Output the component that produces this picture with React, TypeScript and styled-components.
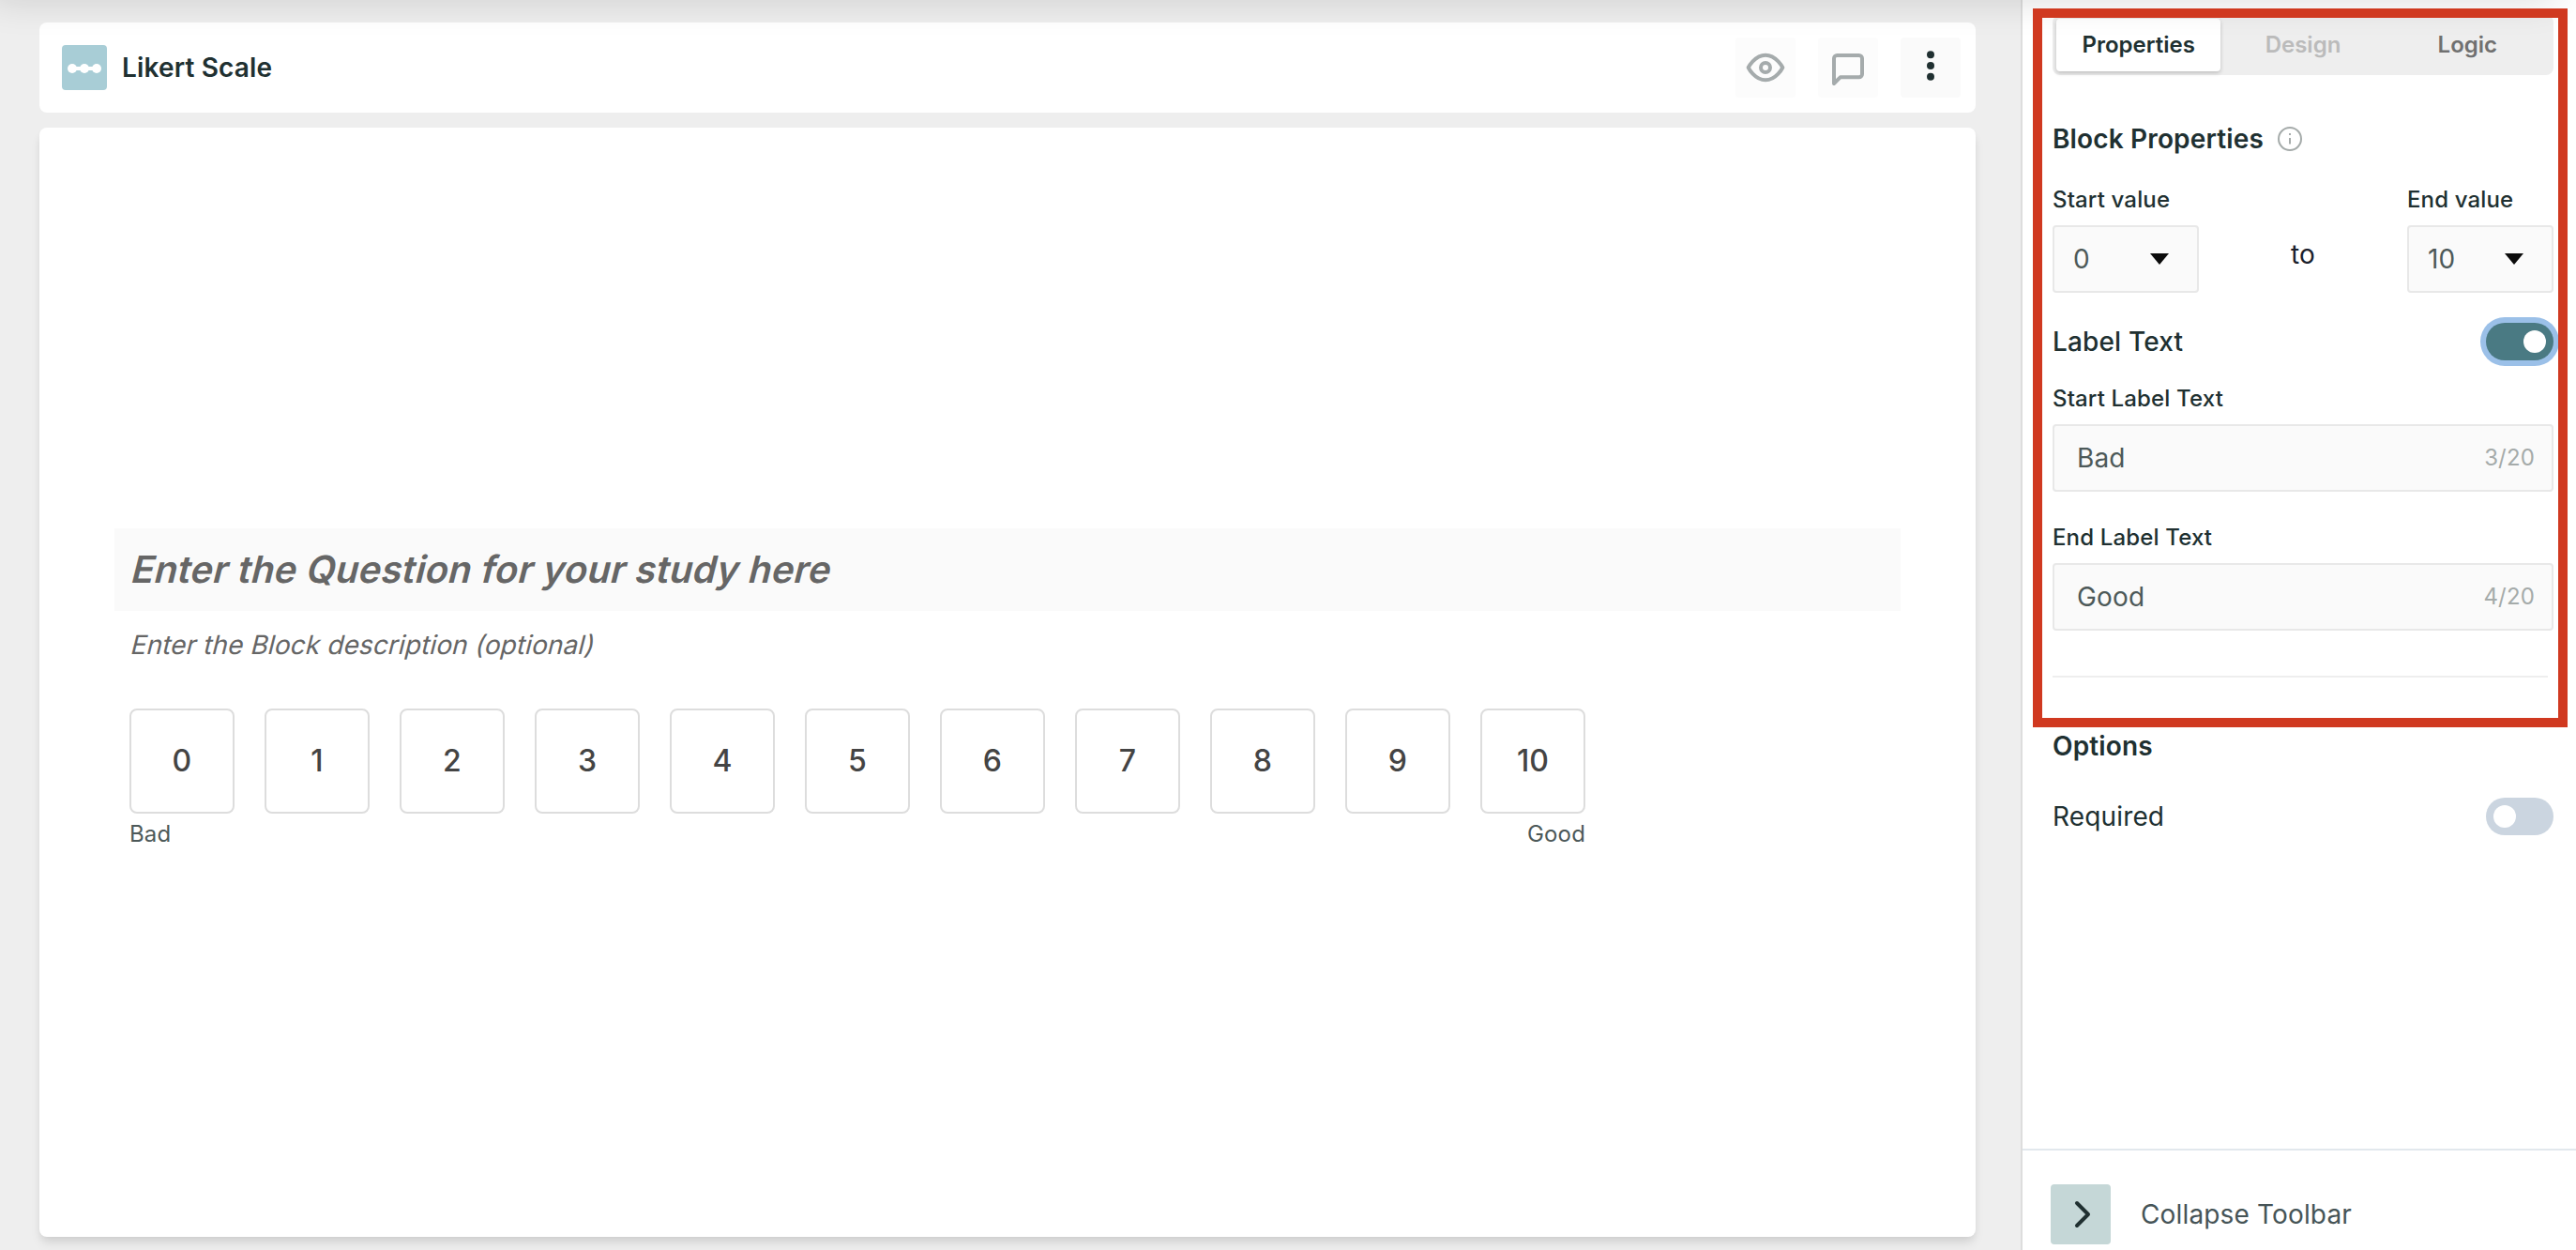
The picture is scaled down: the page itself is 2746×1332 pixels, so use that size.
import React, { useState } from 'react';
import styled, { createGlobalStyle, css } from 'styled-components';

const MAX_LABEL = 20;

export default function App() {
  const [activeTab, setActiveTab] = useState('Properties');
  const [labelsOn, setLabelsOn] = useState(true);
  const [required, setRequired] = useState(false);
  const [startLabel, setStartLabel] = useState('Bad');
  const [endLabel, setEndLabel] = useState('Good');

  return (
    <>
      <GlobalStyle />
      <Page>
        <Workspace>
          <BlockHeader>
            <BlockIcon />
            <BlockName>Likert Scale</BlockName>
            <HeaderActions>
              <ActionButton $muted aria-label="Preview">
                <EyeIcon />
              </ActionButton>
              <ActionButton $muted aria-label="Comments">
                <CommentIcon />
              </ActionButton>
              <ActionButton aria-label="More">
                <DotsIcon />
              </ActionButton>
            </HeaderActions>
          </BlockHeader>

          <Canvas>
            <Question>
              <Slanted>Enter the Question for your study here</Slanted>
            </Question>
            <Description>
              <Slanted>Enter the Block description (optional)</Slanted>
            </Description>
            <LikertScale start={0} end={10} startLabel={startLabel} endLabel={endLabel} />
          </Canvas>
        </Workspace>

        <Sidebar>
          <SidebarBody>
            <Tabs>
              {['Properties', 'Design', 'Logic'].map((tab) => (
                <Tab
                  key={tab}
                  $active={tab === activeTab}
                  disabled={tab === 'Design'}
                  onClick={() => setActiveTab(tab)}
                >
                  {tab}
                </Tab>
              ))}
            </Tabs>

            <SectionTitle>
              Block Properties
              <InfoIcon />
            </SectionTitle>

            <RangeRow>
              <Field>
                <FieldLabel>Start value</FieldLabel>
                <SelectBox>
                  0
                  <Caret />
                </SelectBox>
              </Field>
              <RangeTo>to</RangeTo>
              <Field>
                <FieldLabel>End value</FieldLabel>
                <SelectBox>
                  10
                  <Caret />
                </SelectBox>
              </Field>
            </RangeRow>

            <ToggleRow $top={32} $weight={500}>
              Label Text
              <Toggle $on={labelsOn} $focused onClick={() => setLabelsOn(!labelsOn)}>
                <Knob />
              </Toggle>
            </ToggleRow>

            <TextField $top={25}>
              <FieldLabel>Start Label Text</FieldLabel>
              <InputBox>
                <Input value={startLabel} maxLength={MAX_LABEL} onChange={(e) => setStartLabel(e.target.value)} />
                <Counter>{`${startLabel.length}/${MAX_LABEL}`}</Counter>
              </InputBox>
            </TextField>

            <TextField $top={33}>
              <FieldLabel>End Label Text</FieldLabel>
              <InputBox>
                <Input value={endLabel} maxLength={MAX_LABEL} onChange={(e) => setEndLabel(e.target.value)} />
                <Counter>{`${endLabel.length}/${MAX_LABEL}`}</Counter>
              </InputBox>
            </TextField>

            <Divider />

            <OptionsTitle>Options</OptionsTitle>
            <ToggleRow $top={35} $weight={400}>
              Required
              <Toggle $on={required} onClick={() => setRequired(!required)}>
                <Knob />
              </Toggle>
            </ToggleRow>
          </SidebarBody>

          <SidebarFooter>
            <CollapseButton aria-label="Collapse">
              <ChevronIcon />
            </CollapseButton>
            Collapse Toolbar
          </SidebarFooter>
        </Sidebar>

        <TopShadow />
        <Highlight />
      </Page>
    </>
  );
}

interface LikertScaleProps {
  start: number;
  end: number;
  startLabel: string;
  endLabel: string;
}

function LikertScale({ start, end, startLabel, endLabel }: LikertScaleProps) {
  const values = Array.from({ length: end - start + 1 }, (_, i) => start + i);
  return (
    <Scale>
      <ScaleBoxes>
        {values.map((value) => (
          <ScaleBox key={value}>{value}</ScaleBox>
        ))}
      </ScaleBoxes>
      <ScaleLabels>
        <span>{startLabel}</span>
        <span>{endLabel}</span>
      </ScaleLabels>
    </Scale>
  );
}

const BlockIcon = () => (
  <svg width="48" height="48" viewBox="0 0 48 48">
    <rect width="48" height="48" rx="4" fill="#a8cdd6" />
    <path d="M11 25h26" stroke="#fff" strokeWidth="4" />
    <circle cx="11" cy="25" r="5" fill="#fff" />
    <circle cx="24" cy="25" r="5" fill="#fff" />
    <circle cx="37" cy="25" r="5" fill="#fff" />
  </svg>
);

const EyeIcon = () => (
  <LineIcon viewBox="0 0 24 24">
    <path d="M1 12s4-8 11-8 11 8 11 8-4 8-11 8-11-8-11-8z" />
    <circle cx="12" cy="12" r="3" />
  </LineIcon>
);

// sits a little below the centre of its button
const CommentIcon = () => (
  <LineIcon viewBox="0 -1.2 24 24">
    <path d="M21 15a2 2 0 0 1-2 2H7l-4 4V5a2 2 0 0 1 2-2h14a2 2 0 0 1 2 2z" />
  </LineIcon>
);

const DotsIcon = () => (
  <svg width="64" height="64" viewBox="0 0 64 64" fill="#203031">
    <circle cx="32" cy="18.3" r="4" />
    <circle cx="32" cy="30" r="4" />
    <circle cx="32" cy="41.7" r="4" />
  </svg>
);

const InfoIcon = () => (
  <svg width="26" height="26" viewBox="0 0 26 26" fill="none" stroke="#a5abaa" strokeWidth="2">
    <circle cx="13" cy="13" r="12" />
    <path d="M13 12v6.6M13 7v2" />
  </svg>
);

const Caret = () => (
  <svg width="20" height="12" viewBox="0 0 20 12">
    <path d="M0 0h20L10 12z" fill="#0b0b0b" />
  </svg>
);

const ChevronIcon = () => (
  <svg
    width="64"
    height="64"
    viewBox="0 0 64 64"
    fill="none"
    stroke="#203031"
    strokeWidth="4"
    strokeLinecap="round"
    strokeLinejoin="round"
  >
    <path d="M28 20l12 12-12 12" />
  </svg>
);

const LineIcon = styled.svg`
  width: 40px;
  height: 40px;
  overflow: visible;
  fill: none;
  stroke: #203031;
  stroke-width: 2.4;
  stroke-linecap: round;
  stroke-linejoin: round;
`;

const GlobalStyle = createGlobalStyle`
  * {
    box-sizing: border-box;
  }

  body {
    margin: 0;
    font-family: Inter, 'Liberation Sans', sans-serif;
    font-size: 28px;
    line-height: 40px;
    letter-spacing: 0.15px;
    color: #203031;
    background: #eee;
  }

  svg {
    display: block;
    flex: none;
  }

  button,
  input {
    font: inherit;
    letter-spacing: inherit;
    border: none;
    padding: 0;
    outline: none;
  }
`;

const Page = styled.div`
  position: relative;
  display: flex;
  height: 1332px;
  overflow: hidden;
`;

const Workspace = styled.main`
  flex: 1;
  display: flex;
  flex-direction: column;
  gap: 16px;
  padding: 24px 48px 14px 42px;
`;

const BlockHeader = styled.header`
  display: flex;
  align-items: center;
  height: 96px;
  padding: 0 16px 0 24px;
  background: #fff;
  border-radius: 8px;
`;

const BlockName = styled.div`
  margin-left: 16px;
  font-weight: 600;
`;

const HeaderActions = styled.div`
  display: flex;
  gap: 24px;
  margin-left: auto;
`;

const ActionButton = styled.button<{ $muted?: boolean }>`
  display: flex;
  align-items: center;
  justify-content: center;
  width: 64px;
  height: 64px;
  background: #fafafa;
  border-radius: 4px;
  opacity: ${(props) => (props.$muted ? 0.4 : 1)};
`;

const Canvas = styled.section`
  flex: 1;
  padding: 427px 80px 0;
  background: #fff;
  border-radius: 8px;
  box-shadow: 0 8px 12px -2px rgba(0, 0, 0, 0.1), 0 4px 8px -2px rgba(0, 0, 0, 0.06);
`;

// slanted upright letters, the italic face has a different f and a
const Slanted = styled.span`
  display: inline-block;
  transform: skewX(-14deg);
  transform-origin: 0 75%;
`;

const Question = styled.div`
  height: 88px;
  padding-left: 16px;
  background: #fafafa;
  color: #666;
  font-size: 40px;
  font-weight: 600;
  letter-spacing: 0.2px;
  line-height: 88px;

  ${Slanted} {
    transform-origin: 0 66%;
  }
`;

const Description = styled.div`
  margin-top: 16px;
  padding-left: 16px;
  color: #666;
  letter-spacing: 0.1px;
`;

const Scale = styled.div`
  width: 1552px;
  margin: 48px 0 0 16px;
`;

const ScaleBoxes = styled.div`
  display: flex;
  justify-content: space-between;
`;

const ScaleBox = styled.div`
  display: flex;
  align-items: center;
  justify-content: center;
  width: 112px;
  height: 112px;
  border: 2px solid #ddd;
  border-radius: 8px;
  color: #444;
  font-size: 32px;
  font-weight: 500;
`;

const ScaleLabels = styled.div`
  display: flex;
  justify-content: space-between;
  margin-top: 6px;
  color: #4d5959;
  font-size: 24px;
  line-height: 32px;
`;

const Sidebar = styled.aside`
  display: flex;
  flex-direction: column;
  width: 592px;
  background: #fff;
  border-left: 2px solid #ddd;
`;

const SidebarBody = styled.div`
  flex: 1;
  padding: 16px 24px 0 32px;
`;

const Tabs = styled.div`
  display: grid;
  grid-template-columns: repeat(3, 1fr);
  height: 64px;
  padding: 4px;
  background: #eee;
  border-radius: 8px;
`;

const Tab = styled.button<{ $active: boolean }>`
  background: transparent;
  border-radius: 4px;
  color: #707070;
  font-size: 24px;
  font-weight: 600;
  line-height: 32px;
  letter-spacing: 0;

  &:disabled {
    color: #bbb;
  }

  ${(props) =>
    props.$active &&
    css`
      background: #fff;
      color: #203031;
      box-shadow: 0 2px 4px rgba(0, 0, 0, 0.2);
    `}
`;

const SectionTitle = styled.div`
  display: flex;
  align-items: center;
  gap: 15px;
  margin-top: 48px;
  font-weight: 600;
`;

const OptionsTitle = styled.div`
  margin-top: 53px;
  font-weight: 600;
`;

const RangeRow = styled.div`
  display: flex;
  justify-content: space-between;
  margin-top: 29px;
`;

const RangeTo = styled.div`
  align-self: flex-end;
  padding-bottom: 21px;
  color: #1a202c;
`;

const Field = styled.div`
  display: flex;
  flex-direction: column;
  gap: 11px;
`;

const TextField = styled(Field)<{ $top: number }>`
  margin-top: ${(props) => props.$top}px;
`;

const FieldLabel = styled.label`
  font-size: 24px;
  font-weight: 500;
  line-height: 32px;
`;

const boxStyles = css`
  display: flex;
  align-items: center;
  justify-content: space-between;
  height: 72px;
  background: #fafafa;
  border: 2px solid #e8e8e8;
  border-radius: 4px;
  color: #4d5959;
`;

const SelectBox = styled.div`
  ${boxStyles}
  width: 156px;
  padding: 0 30px 0 20px;
`;

const InputBox = styled.div`
  ${boxStyles}
  padding: 0 18px 0 24px;
`;

const Input = styled.input`
  flex: 1;
  min-width: 0;
  background: transparent;
  color: inherit;
`;

const Counter = styled.span`
  color: #a5abaa;
  font-size: 24px;
  line-height: 32px;
`;

const ToggleRow = styled.div<{ $top: number; $weight: number }>`
  display: flex;
  align-items: center;
  justify-content: space-between;
  margin-top: ${(props) => props.$top}px;
  font-weight: ${(props) => props.$weight};
`;

const Toggle = styled.button<{ $on: boolean; $focused?: boolean }>`
  display: flex;
  align-items: center;
  justify-content: ${(props) => (props.$on ? 'flex-end' : 'flex-start')};
  width: 72px;
  height: 40px;
  padding: 0 8px;
  background: ${(props) => (props.$on ? '#4a7a83' : '#cbd5e0')};
  border-radius: 20px;
  box-shadow: ${(props) => (props.$focused ? '0 0 0 6px #9bc0e8' : 'none')};
`;

const Knob = styled.span`
  width: 24px;
  height: 24px;
  background: #fff;
  border-radius: 50%;
`;

const Divider = styled.div`
  width: 528px;
  height: 2px;
  margin-top: 48px;
  background: #eee;
`;

const SidebarFooter = styled.footer`
  display: flex;
  align-items: center;
  gap: 32px;
  height: 108px;
  padding: 30px 30px 0;
  border-top: 2px solid #e2e8ed;
  color: #465457;
`;

const CollapseButton = styled.button`
  width: 64px;
  height: 64px;
  background: #c5d7d7;
  border-radius: 4px;
`;

// shadow cast on the page by the app bar above it
const TopShadow = styled.div`
  position: absolute;
  top: -100px;
  left: -10px;
  right: 20px;
  height: 100px;
  box-shadow: 0 0 40px rgba(0, 0, 0, 0.14);
  pointer-events: none;
`;

const Highlight = styled.div`
  position: absolute;
  top: 9px;
  left: 2167px;
  width: 570px;
  height: 766px;
  border: 10px solid #d03920;
  pointer-events: none;
`;
